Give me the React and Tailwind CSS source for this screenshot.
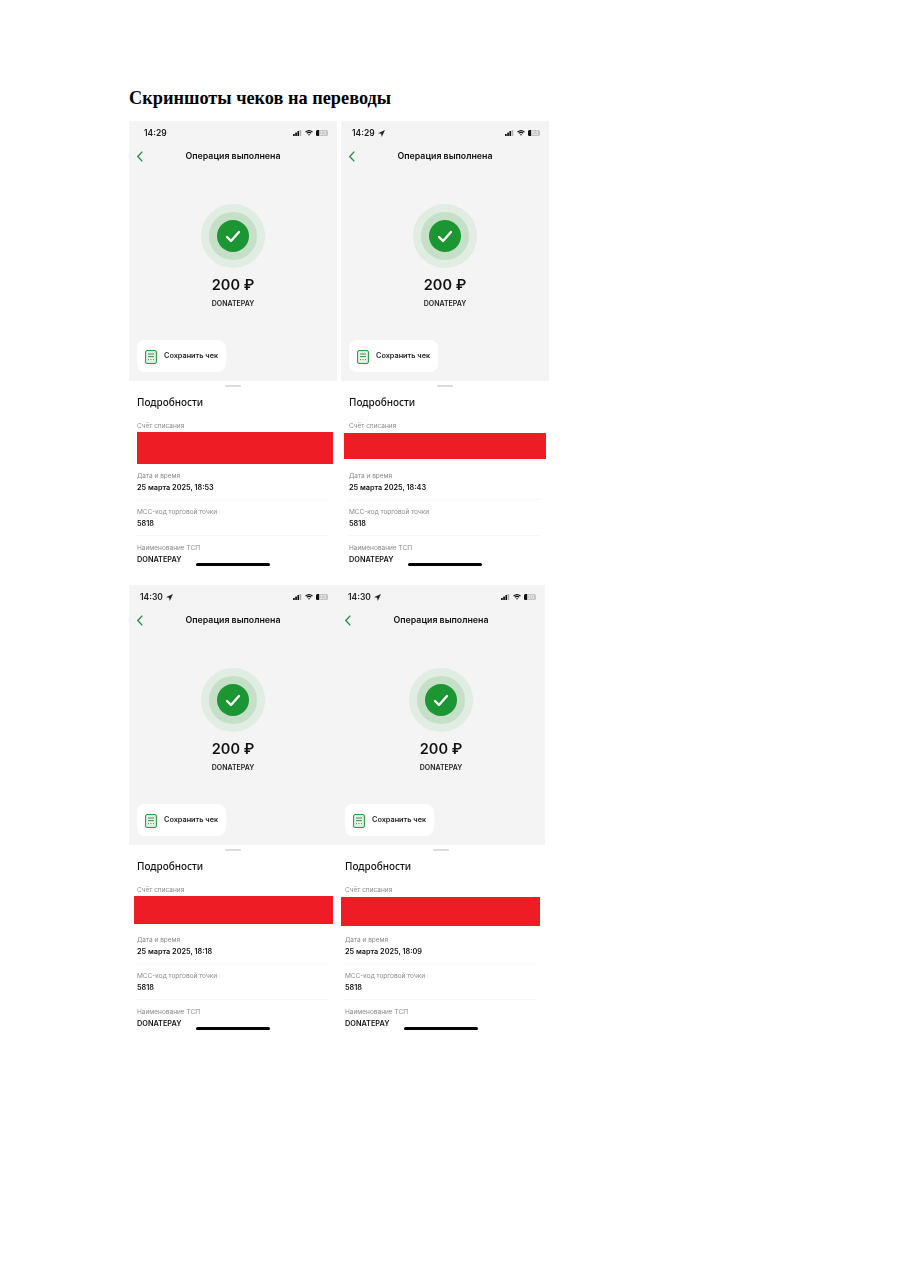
const Signal = () => (
  <svg width="9" height="6" viewBox="0 0 9 6" fill="#111">
    <rect x="0" y="4" width="1.7" height="2" />
    <rect x="2.2" y="2.6" width="1.7" height="3.4" />
    <rect x="4.4" y="1" width="1.7" height="5" />
    <rect x="6.6" y="0" width="1.7" height="6" fill="#b5b5b5" />
  </svg>
);

const Wifi = () => (
  <svg width="8" height="6" viewBox="0 0 8 6" fill="none" stroke="#111" strokeWidth="1.1">
    <path d="M0.5 2 Q4 -0.8 7.5 2" />
    <path d="M1.8 3.3 Q4 1.5 6.2 3.3" />
    <path d="M4 5.8 L2.9 4.6 Q4 3.8 5.1 4.6 Z" fill="#111" stroke="none" />
  </svg>
);

const Battery = ({ level }) => (
  <div className="w-[12px] h-[6px] rounded-[1.5px] bg-[#c4c4c4] relative overflow-hidden flex items-center justify-center">
    <div className="absolute left-0 top-0 bottom-0 w-[3px] bg-[#111]" />
    <span className="relative text-[5px] leading-none text-[#f2f2f2] font-semibold pl-[2px]">{level}</span>
  </div>
);

const Arrow = () => (
  <svg width="7" height="7" viewBox="0 0 6 6" fill="#222">
    <path d="M6 0 L0 2.8 L2.7 3.3 L3.2 6 Z" />
  </svg>
);

const Chevron = () => (
  <svg width="6" height="11" viewBox="0 0 6 11" fill="none" stroke="#2f8f4a" strokeWidth="1.4">
    <path d="M5.3 0.6 L0.8 5.5 L5.3 10.4" />
  </svg>
);

const ReceiptIcon = () => (
  <svg width="12" height="14" viewBox="0 0 12 14" fill="#e4f3e6" stroke="#1e9236" strokeWidth="1">
    <rect x="0.6" y="0.6" width="10.8" height="12.8" rx="1.4" />
    <path d="M3 4 H9 M3 6.6 H9" strokeWidth="0.9" />
    <path d="M3 9.6 H4 M5.5 9.6 H6.5 M8 9.6 H9" strokeWidth="0.9" />
  </svg>
);

const Check = () => (
  <svg width="16" height="13" viewBox="0 0 16 13" fill="none" stroke="#ffffff" strokeWidth="2.3" strokeLinecap="round" strokeLinejoin="round">
    <path d="M2 7 L6 11 L14 2" />
  </svg>
);

const Field = ({ label, value }) => (
  <div>
    <div className="text-[6.5px] leading-[11px] text-[#8a8a8a]">{label}</div>
    <div className="text-[7.3px] leading-[12px] font-semibold text-[#111]">{value}</div>
  </div>
);

const Phone = ({ time, arrow, timeClass, level, date, redClass }) => (
  <div className="relative w-[208px] h-[455px] bg-white flex flex-col font-['Inter',sans-serif] blur-[0.25px]">
    <div className="h-[260px] bg-[#f4f4f4] flex flex-col shrink-0">
      <div className={`h-[24px] flex items-center justify-between pr-[9px] ${timeClass}`}>
        <div className="flex items-center gap-[3px] text-[8.5px] font-semibold text-[#222]">
          <span>{time}</span>
          {arrow && <Arrow />}
        </div>
        <div className="flex items-center gap-[3px]">
          <Signal />
          <Wifi />
          <Battery level={level} />
        </div>
      </div>
      <div className="h-[22px] grid grid-cols-[1fr_auto_1fr] items-center pl-[8px]">
        <Chevron />
        <div className="text-[8.8px] font-semibold text-[#111] -ml-[8px]">Операция выполнена</div>
        <div />
      </div>
      <div className="mt-[37px] w-[64px] h-[64px] mx-auto rounded-full bg-[#e1ece2] flex items-center justify-center">
        <div className="w-[48px] h-[48px] rounded-full bg-[#c5dfc9] flex items-center justify-center">
          <div className="w-[32px] h-[32px] rounded-full bg-[#1c9632] flex items-center justify-center">
            <Check />
          </div>
        </div>
      </div>
      <div className="mt-[5px] text-[14.5px] leading-[24px] font-semibold text-[#111] text-center">200 ₽</div>
      <div className="mt-[2px] text-[7px] leading-[10px] font-semibold text-[#222] text-center">DONATEPAY</div>
      <div className="mt-[31px] ml-[8px] w-[89px] h-[32px] rounded-lg bg-white flex items-center gap-[7px] pl-[8px] pt-[1px]">
        <ReceiptIcon />
        <span className="text-[7.3px] font-semibold text-[#222] whitespace-nowrap">Сохранить чек</span>
      </div>
    </div>
    <div className="mt-[4px] mx-auto w-[16px] h-[2px] rounded-full bg-[#dcdcdc] shrink-0" />
    <div className="pl-[8px] pr-[8px]">
      <div className="mt-[8px] text-[10px] leading-[14px] font-medium text-[#111] font-['Noto_Sans',sans-serif]">Подробности</div>
      <div className="mt-[12px] text-[6.5px] leading-[10px] text-[#8a8a8a]">Счёт списания</div>
      <div className="h-[40px] -mx-[8px] flex flex-col">
        <div className={`bg-[#ee1c25] ${redClass}`} />
      </div>
      <Field label="Дата и время" value={date} />
      <div className="mt-[5px] h-px bg-[#f6f6f6]" />
      <div className="mt-[7px]">
        <Field label="MCC-код торговой точки" value="5818" />
      </div>
      <div className="mt-[5px] h-px bg-[#f6f6f6]" />
      <div className="mt-[7px]">
        <Field label="Наименование ТСП" value="DONATEPAY" />
      </div>
    </div>
    <div className="absolute left-[67px] top-[442px] w-[74px] h-[3px] rounded-full bg-black" />
  </div>
);

export default function App() {
  return (
    <div className="w-[905px] h-[1280px] bg-white pl-[129px] pt-[87px]">
      <h1 className="h-[34px] text-[18.3px] leading-[22px] font-bold text-black font-['Liberation_Serif',serif]">
        Скриншоты чеков на переводы
      </h1>
      <div className="flex gap-[4px]">
        <Phone time="14:29" timeClass="pl-[15px]" level="23" date="25 марта 2025, 18:53" redClass="ml-[8px] w-[196px] h-[32px] mt-[1px]" />
        <Phone time="14:29" arrow timeClass="pl-[11px]" level="53" date="25 марта 2025, 18:43" redClass="ml-[3px] w-[202px] h-[26px] mt-[2px]" />
      </div>
      <div className="flex mt-[9px]">
        <Phone time="14:30" arrow timeClass="pl-[11px]" level="23" date="25 марта 2025, 18:18" redClass="ml-[5px] w-[199px] h-[28px] mt-[1px]" />
        <Phone time="14:30" arrow timeClass="pl-[11px]" level="20" date="25 марта 2025, 18:09" redClass="ml-[4px] w-[199px] h-[29px] mt-[2px]" />
      </div>
    </div>
  );
}
